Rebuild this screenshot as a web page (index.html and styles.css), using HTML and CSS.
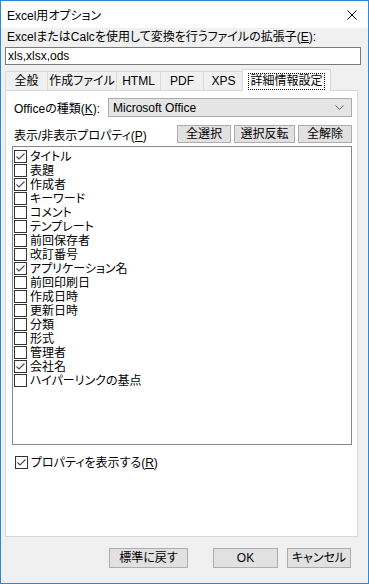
FILE: index.html
```html
<!DOCTYPE html>
<html lang="ja">
<head>
  <meta charset="UTF-8">
  <title>Excel用オプション</title>
  <link rel="stylesheet" href="styles.css">
</head>
<body>
  <div class="window">
    <div class="titlebar">
      <span class="title">Excel用オプション</span>
      <svg class="close" width="10" height="10" viewBox="0 0 10 10">
        <path d="M0.5 0.5L9.5 9.5M9.5 0.5L0.5 9.5" stroke="#000" stroke-width="1" fill="none"/>
      </svg>
    </div>
    <div class="main">
      <div class="label">ExcelまたはCalcを使用して変換を行うファイルの拡張子(<u>E</u>):</div>
      <div class="textbox">xls,xlsx,ods</div>

      <div class="tabs">
        <div class="tab t1">全般</div>
        <div class="tab t2">作成ファイル</div>
        <div class="tab t3">HTML</div>
        <div class="tab t4">PDF</div>
        <div class="tab t5">XPS</div>
        <div class="tab active"><span class="focus">詳細情報設定</span></div>
      </div>

      <div class="panel">
        <div class="row">
          <span class="row-label">Officeの種類(<u>K</u>):</span>
          <div class="combo">
            <span>Microsoft Office</span>
            <svg width="9" height="5" viewBox="0 0 9 5">
              <path d="M0.5 0.5L4.5 4.5L8.5 0.5" stroke="#606060" fill="none"/>
            </svg>
          </div>
        </div>
        <div class="row row-buttons">
          <span class="row-label">表示/非表示プロパティ(<u>P</u>)</span>
          <div class="btn-group">
            <button class="btn b-all">全選択</button>
            <button class="btn b-inv">選択反転</button>
            <button class="btn b-none">全解除</button>
          </div>
        </div>

        <div class="listbox" id="props"></div>

        <label class="check show-props">
          <span class="cb checked"></span><span class="name">プロパティを表示する(<u>R</u>)</span>
        </label>
      </div>

      <div class="footer">
        <button class="btn b-reset">標準に戻す</button>
        <button class="btn b-ok">OK</button>
        <button class="btn b-cancel">キャンセル</button>
      </div>
    </div>
  </div>

  <script>
    const props = [
      ["タイトル", true], ["表題", false], ["作成者", true], ["キーワード", false],
      ["コメント", false], ["テンプレート", false], ["前回保存者", false], ["改訂番号", false],
      ["アプリケーション名", true], ["前回印刷日", false], ["作成日時", false], ["更新日時", false],
      ["分類", false], ["形式", false], ["管理者", false], ["会社名", true],
      ["ハイパーリンクの基点", false]
    ];

    const mark = '<svg width="11" height="11" viewBox="0 0 11 11"><path d="M1.5 5.5L4 8L9.5 2.5" stroke="#4a4a4a" stroke-width="1.1" fill="none"/></svg>';

    const list = document.getElementById("props");
    props.forEach(([name, on]) => {
      const item = document.createElement("div");
      item.className = "check item";
      item.innerHTML = `<span class="cb">${on ? mark : ""}</span><span class="name">${name}</span>`;
      list.appendChild(item);
    });

    document.querySelector(".show-props .cb").innerHTML = mark;
  </script>
</body>
</html>
```

FILE: styles.css
```css
body {
  margin: 0;
  font-family: "Liberation Sans", "Noto Sans CJK JP", sans-serif;
  font-size: 12px;
  font-feature-settings: "palt";
  color: #000000;
  background-color: #f0f0f0;
}
u {
  text-decoration-thickness: 1px;
  text-underline-offset: 1px;
}
.window {
  width: 369px;
  height: 584px;
  box-sizing: border-box;
  border: 1px solid #2b88d8;
  background-color: #f0f0f0;
  display: flex;
  flex-direction: column;
}
.titlebar {
  height: 27px;
  background-color: #ffffff;
  display: flex;
  align-items: center;
  justify-content: space-between;
  padding-left: 6px;
}
.title {
  font-size: 12px;
}
.close {
  margin-right: 11px;
}
.main {
  padding: 0 7px 0 4px;
}
.label {
  height: 19px;
  line-height: 19px;
  padding-left: 2px;
}
.textbox {
  height: 18px;
  box-sizing: border-box;
  border: 1px solid #7a7a7a;
  background-color: #ffffff;
  line-height: 16px;
  padding-left: 2px;
}
/* Tabs */
.tabs {
  display: flex;
  align-items: flex-end;
  margin-top: 4px;
  height: 21px;
}
.tab {
  height: 19px;
  box-sizing: border-box;
  border: 1px solid #d9d9d9;
  border-bottom: none;
  margin-left: -1px;
  line-height: 18px;
  text-align: center;
  background-color: #f0f0f0;
}
.tab.t1 { margin-left: 0; width: 43px; }
.tab.t2 { width: 70px; }
.tab.t3 { width: 45px; }
.tab.t4 { width: 44px; }
.tab.t5 { width: 41px; }
.tab.active {
  height: 22px;
  width: 89px;
  margin: 0 0 -1px -2px;
  background-color: #ffffff;
  position: relative;
  z-index: 1;
  padding-top: 2px;
}
.tab .focus {
  display: inline-block;
  line-height: 15px;
  padding: 0 1px;
  outline: 1px dotted #000000;
}
.panel {
  height: 447px;
  box-sizing: border-box;
  margin-right: 3px;
  border: 1px solid #d9d9d9;
  background-color: #ffffff;
  padding: 7px 5px 0 6px;
}
.row {
  display: flex;
  align-items: center;
  justify-content: space-between;
  height: 19px;
}
.row-label {
  padding-left: 2px;
}
.combo {
  width: 244px;
  height: 19px;
  box-sizing: border-box;
  border: 1px solid #acacac;
  background-color: #e5e5e5;
  display: flex;
  align-items: center;
  justify-content: space-between;
  padding: 0 7px 0 4px;
}
.row-buttons {
  margin-top: 8px;
  height: 18px;
}
.btn-group {
  display: flex;
  gap: 3px;
}
.btn {
  font: inherit;
  height: 18px;
  box-sizing: border-box;
  border: 1px solid #adadad;
  background-color: #e1e1e1;
  padding: 0;
  line-height: 15px;
  color: #000000;
}
.b-all, .b-none { width: 54px; }
.b-inv { width: 61px; }
/* Property list */
.listbox {
  margin-top: 3px;
  height: 299px;
  box-sizing: border-box;
  border: 1px solid #828790;
  padding: 2px 0 0 1px;
}
.check {
  display: flex;
  align-items: center;
  height: 14px;
  line-height: 14px;
}
.check .name {
  padding-top: 2px;
}
.cb {
  width: 13px;
  height: 13px;
  box-sizing: border-box;
  border: 1px solid #333333;
  background-color: #ffffff;
  margin-right: 3px;
  display: flex;
  align-items: center;
  justify-content: center;
  flex-shrink: 0;
}
.show-props {
  margin-top: 10px;
  padding-left: 3px;
}
/* Footer */
.footer {
  display: flex;
  justify-content: flex-end;
  margin-top: 11px;
  padding-right: 10px;
}
.footer .btn {
  height: 20px;
  line-height: 17px;
}
.b-reset { width: 79px; margin-right: 25px; }
.b-ok { width: 65px; margin-right: 9px; }
.b-cancel { width: 64px; }
```
